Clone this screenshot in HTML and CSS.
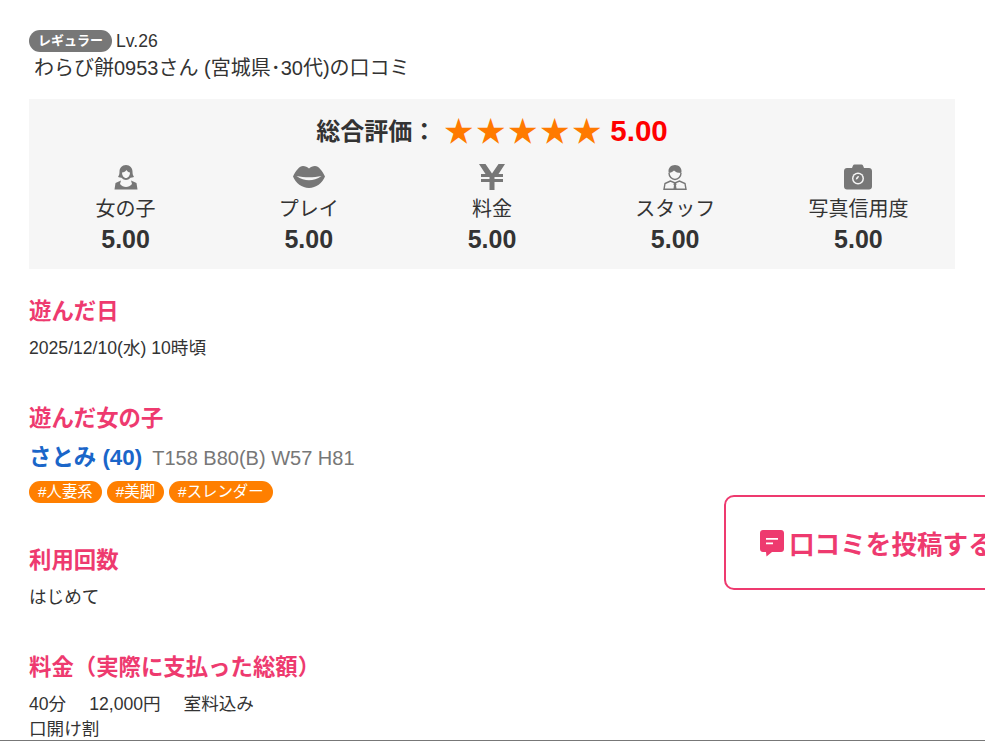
FILE: index.html
```html
<!doctype html>
<html lang="ja">
  <head>
    <title>口コミ詳細</title>
    <meta charset="utf-8">
    <link rel="stylesheet" href="styles.css">
  </head>

  <body>
    <div class="page">
      <div class="reviewer">
        <div class="rank"><span class="rank-badge">レギュラー</span> Lv.26</div>
        <h1 class="reviewer-name">わらび餅0953さん (宮城県･30代)の口コミ</h1>
      </div>

      <div class="score-box">
        <div class="total">
          <span class="total-label">総合評価：</span>
          <span class="stars">★★★★★</span>
          <span class="total-num">5.00</span>
        </div>
        <div class="scores">
          <div class="score">
            <svg class="score-icon" viewBox="0 0 24 26"><path fill="#777" d="M12 1c-4 0-6.500 3-6.500 6.500 0 2.500-.5 4-1.500 5.500 1.200.6 2.500.8 3.500.8C9 15.200 10.400 16 12 16s3-.8 4.500-2.200c1 0 2.300-.2 3.500-.8-1-1.500-1.500-3-1.500-5.500C18.500 4 16 1 12 1z"/><path fill="#f6f6f6" d="M8 8.500c2 0 3.500-1 4.500-2.500 .8 1.300 2 2.300 3.500 2.500 0 3-1.800 5.500-4 5.500s-4-2.500-4-5.500z"/><path fill="#777" d="M7 16.500 1.500 19 .5 25.500h23L22.500 19 17 16.500l1 3.500c-1.500 2-3.800 3-6 3s-4.500-1-6-3z"/></svg>
            <div class="score-name">女の子</div>
            <div class="score-num">5.00</div>
          </div>
          <div class="score">
            <svg class="score-icon" viewBox="0 0 32 26"><path fill="#777" d="M10 2c2.200 0 4.600 1 6 2.500C17.400 3 19.800 2 22 2c3.500 0 7.500 5 10 10.500C29.500 19 23 24 16 24S2.500 19 0 12.500C2.500 7 6.500 2 10 2z"/><path fill="#f6f6f6" d="M3.500 12c4 .9 8.500 1.200 12.500 1.200s8.500-.3 12.500-1.200c-4 3-8.500 4.200-12.500 4.200S7.500 15 3.500 12z"/></svg>
            <div class="score-name">プレイ</div>
            <div class="score-num">5.00</div>
          </div>
          <div class="score">
            <svg class="score-icon" viewBox="0 0 26 26"><path fill="#777" d="M0 0h6.500L13 9.500 19.500 0H26l-6.500 10H24v3h-8.500v2H24v3h-8.500v8h-5v-8H2v-3h8.500v-2H2v-3h4.500z"/></svg>
            <div class="score-name">料金</div>
            <div class="score-num">5.00</div>
          </div>
          <div class="score">
            <svg class="score-icon" viewBox="0 0 24 26"><path fill="#777" d="M12 1C8 1 5.500 3.800 5.500 7c0 .8.100 1.500.3 2 1.700-.2 3.700-1 5.200-2.500 1.500 1.700 4 2.500 7.200 2.500.2-.6.300-1.300.3-2 0-3.200-2.500-6-6.500-6z"/><path fill="none" stroke="#777" stroke-width="1.400" d="M6 9c0 3.500 2.700 6.500 6 6.500s6-3 6-6.500M7.500 17 2 19.500 1 25.300h22l-1-5.800-5.500-2.500-4.500 2z"/><path fill="#777" d="M11 19h2l.6 1.200-.6 1 .6 4h-3.200l.6-4-.6-1z"/></svg>
            <div class="score-name">スタッフ</div>
            <div class="score-num">5.00</div>
          </div>
          <div class="score">
            <svg class="score-icon" viewBox="0 0 28 26"><path fill="#777" d="M9 1.500c.3-.7.800-1 1.500-1h7c.7 0 1.200.3 1.500 1L20 4h5c1.700 0 3 1.300 3 3v15.500c0 1.700-1.300 3-3 3H3c-1.700 0-3-1.300-3-3V7c0-1.700 1.300-3 3-3h5z"/><circle cx="14" cy="14.500" r="6" fill="#f6f6f6"/><circle cx="14" cy="14.500" r="4.500" fill="#777"/><path fill="#f6f6f6" d="M11.800 15.500c0-2 1.200-3.400 3.200-3.600-.2 1.900-1.300 3.200-3.200 3.600z"/></svg>
            <div class="score-name">写真信用度</div>
            <div class="score-num">5.00</div>
          </div>
        </div>
      </div>

      <section class="block">
        <h2 class="block-title">遊んだ日</h2>
        <p class="block-text">2025/12/10(水) 10時頃</p>
      </section>

      <section class="block block-girl">
        <h2 class="block-title">遊んだ女の子</h2>
        <div class="girl"><a class="girl-name">さとみ (40)</a><span class="girl-size">T158 B80(B) W57 H81</span></div>
        <ul class="tags">
          <li class="tag">#人妻系</li>
          <li class="tag">#美脚</li>
          <li class="tag">#スレンダー</li>
        </ul>
      </section>

      <section class="block">
        <h2 class="block-title">利用回数</h2>
        <p class="block-text">はじめて</p>
      </section>

      <section class="block block-last">
        <h2 class="block-title">料金（実際に支払った総額）</h2>
        <p class="block-text">40分<span class="gap">12,000円</span><span class="gap">室料込み</span><br>口開け割</p>
      </section>
    </div>

    <a class="post-btn">
      <svg class="post-icon" viewBox="0 0 26 28"><path fill="#ee3a6f" d="M4 1h18c1.700 0 3 1.300 3 3v16c0 1.700-1.300 3-3 3H13l-5.500 4.500L7 23H4c-1.700 0-3-1.300-3-3V4c0-1.700 1.300-3 3-3z"/><path fill="#fff" d="M7 9h12v1.800H7zM7 13.500h7v1.800H7z"/></svg>
      <span>口コミを投稿する</span>
    </a>
    <div class="edge"></div>
  </body>
</html>
```

FILE: styles.css
```css
html, body {
  margin: 0;
  padding: 0;
  height: 741px;
  overflow: hidden;
}
body {
  position: relative;
  background: #fff;
  color: #333;
  font-family: "Liberation Sans", "Noto Sans CJK JP", sans-serif;
  font-size: 16px;
}
.page {
  padding: 30px 30px 0 29px;
}
.rank {
  display: flex;
  align-items: center;
  gap: 4px;
  height: 22px;
  font-size: 17.6px;
}
.rank-badge {
  display: inline-block;
  height: 22px;
  line-height: 21px;
  padding: 0 9px;
  border-radius: 11px;
  background: #777;
  color: #fff;
  font-size: 13px;
  font-weight: bold;
}
.reviewer-name {
  margin: 3px 0 0 5px;
  font-size: 20px;
  font-weight: normal;
  line-height: 27px;
}
.score-box {
  margin-top: 17px;
  height: 170px;
  background: #f6f6f6;
  box-sizing: border-box;
  padding-top: 13px;
}
.total {
  display: flex;
  justify-content: center;
  align-items: center;
  height: 38px;
  font-weight: bold;
}
.total-label {
  font-size: 24px;
  margin-bottom: 4px;
}
.stars {
  margin: 0 0 5px 8px;
  color: #ff7a00;
  font-size: 29px;
  letter-spacing: 3px;
  font-weight: normal;
}
.total-num {
  margin-left: 6px;
  color: #f00;
  font-size: 29.500px;
}
.scores {
  display: grid;
  grid-template-columns: repeat(5, 1fr);
  margin-top: 14px;
  padding: 0 5px;
}
.score {
  display: flex;
  flex-direction: column;
  align-items: center;
}
.score-icon {
  height: 26px;
  width: auto;
  display: block;
}
.score-name {
  margin-top: 5px;
  font-size: 20px;
  line-height: 29px;
}
.score-num {
  margin-top: -1px;
  font-size: 25px;
  font-weight: bold;
  line-height: 33px;
}
.block {
  margin-bottom: 43px;
}
.block:first-of-type {
  margin-top: 28px;
}
.block-girl {
  margin-bottom: 43px;
}
.block-last {
  margin-bottom: 0;
}
.block-title {
  margin: 0;
  color: #ee3a6f;
  font-size: 22.400px;
  line-height: 30px;
  font-weight: bold;
}
.block-text {
  margin: 9px 0 0;
  font-size: 17.600px;
  line-height: 25px;
}
.gap {
  margin-left: 23px;
}
.girl {
  display: flex;
  align-items: baseline;
  gap: 10px;
  margin-top: 9px;
  line-height: 30px;
}
.girl-name {
  color: #1a66c9;
  font-size: 22.400px;
  font-weight: bold;
}
.girl-size {
  color: #777;
  font-size: 20px;
}
.tags {
  display: flex;
  gap: 5px;
  list-style: none;
  margin: 8px 0 0;
  padding: 0;
}
.tag {
  height: 22px;
  line-height: 22px;
  padding: 0 9px;
  border-radius: 11px;
  background: #ff7f00;
  color: #fff;
  font-size: 15.400px;
}
.post-btn {
  position: absolute;
  left: 724px;
  top: 495px;
  width: 300px;
  height: 95px;
  box-sizing: border-box;
  border: 2px solid #ee3a6f;
  border-radius: 10px;
  background: #fff;
  display: flex;
  align-items: center;
  padding-left: 33px;
  color: #ee3a6f;
  font-size: 25.600px;
  font-weight: bold;
  white-space: nowrap;
}
.post-icon {
  width: 26px;
  height: 28px;
  margin-right: 4px;
}
.edge {
  position: absolute;
  left: 0;
  right: 0;
  top: 740px;
  height: 1px;
  background: #777;
}
```
